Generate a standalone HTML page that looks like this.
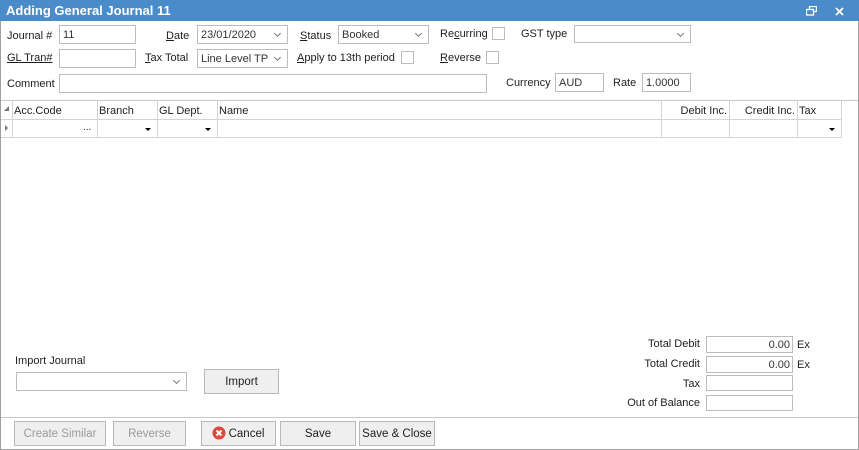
<!DOCTYPE html>
<html><head><meta charset="utf-8"><style>
*{box-sizing:border-box;margin:0;padding:0}
body{width:859px;height:450px;background:#fff;font-family:"Liberation Sans",sans-serif;font-size:11px;color:#1e1e1e;position:relative;overflow:hidden}
.a{position:absolute}
.win{left:0;top:0;width:859px;height:450px;border:1px solid #a0a0a0;border-top:none}
.title{left:0;top:0;width:859px;height:21px;background:#4a8bca;color:#fff;font-weight:bold;font-size:13px;padding:3px 0 0 6px}
.in{border:1px solid #bcbcbc;background:#fff;height:19px;padding:3px 3px 0;white-space:nowrap;color:#333}
.cb{border:1px solid #bcbcbc;background:#fff;width:13px;height:13px}
.dd:after{content:"";position:absolute;right:7px;top:5px;width:4px;height:4px;border-right:1px solid #777;border-bottom:1px solid #777;transform:rotate(45deg)}
.l{white-space:nowrap}
u{text-decoration:underline}
.g{border-top:1px solid #c8c8c8}
.col{border-right:1px solid #d4d4d4;height:36px;top:101px}
.btn{border:1px solid #b8b8b8;background:#efefef;height:25px;text-align:center;line-height:24px;font-size:11.5px}
.dis{color:#9a9a9a}
.tri{width:0;height:0;border-left:3px solid transparent;border-right:3px solid transparent;border-top:3px solid #000}
.r{text-align:right}
</style></head><body>
<div class="a win"></div>
<div class="a title">Adding General Journal 11</div>
<svg class="a" style="left:806px;top:6px" width="11" height="10"><rect x="3.5" y="0.5" width="7" height="5" fill="none" stroke="#fff" stroke-width="1.3"/><rect x="0.5" y="3.5" width="7" height="5.5" fill="#4a8bca" stroke="#fff" stroke-width="1.3"/></svg>
<svg class="a" style="left:835px;top:7px" width="10" height="9"><path d="M1 1L8 8M8 1L1 8" stroke="#fff" stroke-width="1.8"/></svg>

<div class="a l" style="left:7px;top:30px">Journal #</div>
<div class="a in" style="left:59px;top:25px;width:77px">11</div>
<div class="a l" style="left:166px;top:30px"><u>D</u>ate</div>
<div class="a in dd" style="left:197px;top:25px;width:91px">23/01/2020</div>
<div class="a l" style="left:300px;top:30px"><u>S</u>tatus</div>
<div class="a in dd" style="left:338px;top:25px;width:91px">Booked</div>
<div class="a l" style="left:440px;top:28px">Re<u>c</u>urring</div>
<div class="a cb" style="left:492px;top:27px"></div>
<div class="a l" style="left:521px;top:28px">GST type</div>
<div class="a in dd" style="left:574px;top:25px;width:117px;height:18px"></div>

<div class="a l" style="left:7px;top:52px"><u>GL Tran#</u></div>
<div class="a in" style="left:59px;top:49px;width:77px"></div>
<div class="a l" style="left:145px;top:52px"><u>T</u>ax Total</div>
<div class="a in dd" style="left:197px;top:49px;width:91px">Line Level TP</div>
<div class="a l" style="left:297px;top:52px"><u>A</u>pply to 13th period</div>
<div class="a cb" style="left:401px;top:51px"></div>
<div class="a l" style="left:440px;top:52px"><u>R</u>everse</div>
<div class="a cb" style="left:486px;top:51px"></div>

<div class="a l" style="left:7px;top:78px">Comment</div>
<div class="a in" style="left:59px;top:74px;width:428px"></div>
<div class="a l" style="left:506px;top:77px">Currency</div>
<div class="a in" style="left:555px;top:73px;width:49px">AUD</div>
<div class="a l" style="left:613px;top:77px">Rate</div>
<div class="a in" style="left:642px;top:73px;width:49px">1.0000</div>

<div class="a g" style="left:1px;top:100px;width:857px"></div>
<div class="a" style="left:1px;top:119px;width:840px;border-top:1px solid #d4d4d4"></div>
<div class="a" style="left:1px;top:137px;width:841px;border-top:1px solid #d4d4d4"></div>
<div class="a col" style="left:1px;width:12px"></div>
<div class="a col" style="left:13px;width:85px"></div>
<div class="a col" style="left:98px;width:60px"></div>
<div class="a col" style="left:158px;width:60px"></div>
<div class="a col" style="left:218px;width:444px"></div>
<div class="a col" style="left:662px;width:68px"></div>
<div class="a col" style="left:730px;width:68px"></div>
<div class="a col" style="left:798px;width:44px"></div>
<div class="a" style="left:4px;top:106px;width:0;height:0;border-left:5px solid transparent;border-bottom:5px solid #777"></div>
<div class="a" style="left:5px;top:125px;width:0;height:0;border-top:3px solid transparent;border-bottom:3px solid transparent;border-left:3px solid #777"></div>
<div class="a l" style="left:14px;top:105px">Acc.Code</div>
<div class="a l" style="left:99px;top:105px">Branch</div>
<div class="a l" style="left:159px;top:105px">GL Dept.</div>
<div class="a l" style="left:219px;top:105px">Name</div>
<div class="a l r" style="left:662px;top:105px;width:65px">Debit Inc.</div>
<div class="a l r" style="left:730px;top:105px;width:65px">Credit Inc.</div>
<div class="a l" style="left:799px;top:105px">Tax</div>
<div class="a l" style="left:83px;top:122px;font-size:10px">...</div>
<div class="a tri" style="left:145px;top:128px"></div>
<div class="a tri" style="left:205px;top:128px"></div>
<div class="a tri" style="left:829px;top:128px"></div>

<div class="a l" style="left:15px;top:355px">Import Journal</div>
<div class="a in dd" style="left:16px;top:372px;width:171px"></div>
<div class="a btn" style="left:204px;top:369px;width:75px">Import</div>

<div class="a l r" style="left:600px;top:338px;width:100px">Total Debit</div>
<div class="a in r" style="left:706px;top:336px;width:87px;height:17px;padding:2px 2px 0">0.00</div>
<div class="a l" style="left:797px;top:339px">Ex</div>
<div class="a l r" style="left:600px;top:358px;width:100px">Total Credit</div>
<div class="a in r" style="left:706px;top:356px;width:87px;height:17px;padding:2px 2px 0">0.00</div>
<div class="a l" style="left:797px;top:359px">Ex</div>
<div class="a l r" style="left:600px;top:378px;width:100px">Tax</div>
<div class="a in" style="left:706px;top:375px;width:87px;height:16px"></div>
<div class="a l r" style="left:600px;top:397px;width:100px">Out of Balance</div>
<div class="a in" style="left:706px;top:395px;width:87px;height:16px"></div>

<div class="a g" style="left:1px;top:417px;width:857px"></div>
<div class="a btn dis" style="left:14px;top:421px;width:92px">Create Similar</div>
<div class="a btn dis" style="left:113px;top:421px;width:73px">Reverse</div>
<div class="a btn" style="left:201px;top:421px;width:75px;padding-left:16px">Cancel</div>
<svg class="a" style="left:212px;top:426px" width="14" height="14"><circle cx="7" cy="7" r="6.5" fill="#d84a3a"/><path d="M4.5 4.5L9.5 9.5M9.5 4.5L4.5 9.5" stroke="#fff" stroke-width="2"/></svg>
<div class="a btn" style="left:280px;top:421px;width:76px">Save</div>
<div class="a btn" style="left:359px;top:421px;width:76px">Save &amp; Close</div>
</body></html>
